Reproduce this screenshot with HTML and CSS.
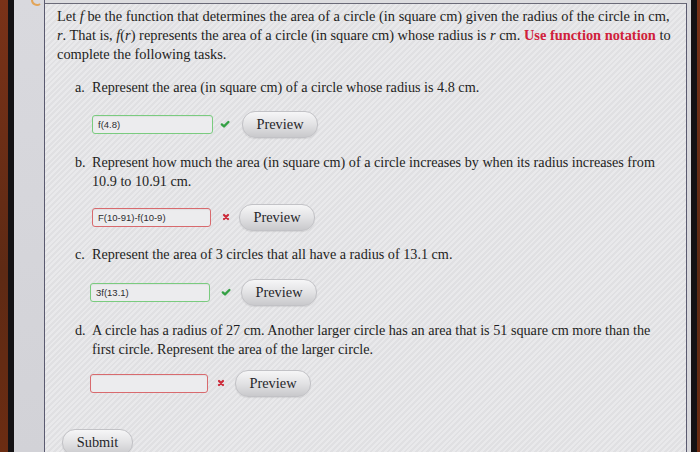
FILE: index.html
```html
<!DOCTYPE html>
<html>
<head>
<meta charset="utf-8">
<link rel="stylesheet" href="styles.css">
</head>
<body>
<div class="screen">
  <div class="edge-brown"></div>
  <div class="edge-black"></div>
  <div class="sidebar"><svg class="logo" width="14" height="7" viewBox="0 0 14 7"><path d="M3 0 A5 5 0 0 0 11 4" fill="none" stroke="#e2a458" stroke-width="2"/></svg></div>
  <div class="main">
    <p class="intro">Let <i>f</i> be the function that determines the area of a circle (in square cm) given the radius of the circle in cm, <i>r</i>. That is, <i>f</i>(<i>r</i>) represents the area of a circle (in square cm) whose radius is <i>r</i> cm. <b class="red">Use function notation</b> to complete the following tasks.</p>

    <div class="item item-a">
      <div class="q"><span class="mark">a.</span><span class="qt">Represent the area (in square cm) of a circle whose radius is 4.8 cm.</span></div>
      <div class="row">
        <div class="inp ok">f(4.8)</div>
        <svg class="ico" width="12" height="10" viewBox="0 0 12 10"><path d="M2.8 5.4 L5 7.4 L9.4 3" fill="none" stroke="#34a044" stroke-width="2.4" stroke-linecap="round" stroke-linejoin="round"/></svg>
        <div class="btn">Preview</div>
      </div>
    </div>

    <div class="item item-b">
      <div class="q"><span class="mark">b.</span><span class="qt">Represent how much the area (in square cm) of a circle increases by when its radius increases from 10.9 to 10.91 cm.</span></div>
      <div class="row">
        <div class="inp bad">F(10-91)-f(10-9)</div>
        <svg class="ico x" width="12" height="10" viewBox="0 0 12 10"><path d="M4 3 L8 7 M8 3 L4 7" fill="none" stroke="#cc2a3a" stroke-width="2.2" stroke-linecap="round"/></svg>
        <div class="btn">Preview</div>
      </div>
    </div>

    <div class="item item-c">
      <div class="q"><span class="mark">c.</span><span class="qt">Represent the area of 3 circles that all have a radius of 13.1 cm.</span></div>
      <div class="row">
        <div class="inp ok">3f(13.1)</div>
        <svg class="ico" width="12" height="10" viewBox="0 0 12 10"><path d="M2.8 5.4 L5 7.4 L9.4 3" fill="none" stroke="#34a044" stroke-width="2.4" stroke-linecap="round" stroke-linejoin="round"/></svg>
        <div class="btn">Preview</div>
      </div>
    </div>

    <div class="item item-d">
      <div class="q"><span class="mark">d.</span><span class="qt">A circle has a radius of 27 cm. Another larger circle has an area that is 51 square cm more than the first circle. Represent the area of the larger circle.</span></div>
      <div class="row">
        <div class="inp bad"></div>
        <svg class="ico x" width="12" height="10" viewBox="0 0 12 10"><path d="M4 3 L8 7 M8 3 L4 7" fill="none" stroke="#cc2a3a" stroke-width="2.2" stroke-linecap="round"/></svg>
        <div class="btn">Preview</div>
      </div>
    </div>

    <div class="submit-row"><div class="btn submit">Submit</div></div>
  </div>
  <div class="edge-light"></div>
  <div class="edge-black"></div>
  <div class="edge-brown r"></div>
</div>
</body>
</html>
```
FILE: styles.css
```css
html, body {
  margin: 0;
  padding: 0;
  width: 700px;
  height: 452px;
  overflow: hidden;
  background: #dcdcdf;
}
.screen {
  display: flex;
  width: 700px;
  height: 452px;
  font-family: "Liberation Serif", "Times New Roman", serif;
  color: #1e1e22;
}
.edge-brown {
  width: 8px;
  flex: none;
  background: linear-gradient(180deg, #7a3218 0%, #5e2a14 60%, #6b2c12 100%);
}
.edge-brown.r { width: 3px; }
.edge-black {
  width: 6px;
  flex: none;
  background: #141214;
}
.sidebar {
  width: 30px;
  flex: none;
  background: linear-gradient(180deg, #d9d9de, #d2d2d7);
  border-right: 1px solid #5a5a70;
  display: flex;
  align-items: flex-start;
  overflow: hidden;
}
.logo {
  display: block;
  margin-left: 15px;
}
.edge-light {
  width: 4px;
  flex: none;
  background: #d8d8dc;
}
.main {
  flex: 1;
  margin-top: 3px;
  border-top: 1px solid #6a6a78;
  border-right: 1px solid #5a5a70;
  background-color: #e4e4e7;
  background-image: repeating-linear-gradient(135deg, rgba(255,255,255,0.18) 0 2px, rgba(0,0,0,0.02) 2px 4px);
  padding: 2.5px 7px 0 12px;
  font-size: 14.2px;
  line-height: 19px;
}
.intro {
  margin: 0;
  font-size: 14.4px;
}
.red {
  color: #d0203a;
}
.q {
  display: flex;
  padding-left: 18px;
}
.mark {
  width: 17px;
  flex: none;
}
.qt {
  flex: 1;
  padding-right: 14px;
}
.item-a { margin-top: 14px; }
.item-b { margin-top: 15px; }
.item-c { margin-top: 14px; }
.item-d { margin-top: 15px; }
.row {
  display: flex;
  align-items: center;
  height: 27px;
  padding-left: 35px;
}
.item-a .row { margin-top: 14px; }
.item-b .row { margin-top: 13px; }
.item-c .row { margin-top: 15px; padding-left: 33px; }
.item-d .row { margin-top: 11px; padding-left: 33px; }
.inp {
  width: 114px;
  height: 17px;
  border: 1.5px solid #7acb7f;
  border-radius: 3px;
  background: #ececee;
  font-family: "Liberation Sans", Arial, sans-serif;
  font-size: 9.5px;
  line-height: 17px;
  padding-left: 5px;
  color: #2c2c30;
  box-shadow: inset 0 1px 1px rgba(0,0,0,0.05);
}
.inp.bad { border-color: #d86a6e; }
.item-b .inp { width: 112px; }
.item-c .inp { width: 113px; }
.item-d .inp { width: 111px; }
.ico {
  display: block;
  flex: none;
  margin-left: 6px;
  margin-right: 11px;
}
.ico.x { margin-left: 9px; margin-right: 7px; }
.item-c .ico { margin-left: 10px; margin-right: 9px; }
.item-d .ico.x { margin-left: 7px; margin-right: 8px; }
.btn {
  width: 74px;
  height: 25px;
  border: 1px solid #c2c2c6;
  border-radius: 13px;
  background: linear-gradient(180deg, #f6f6f7 0%, #e2e2e4 50%, #c9c9cc 100%);
  text-align: center;
  line-height: 24px;
  font-size: 14.4px;
  color: #26262a;
  box-shadow: 0 1px 1px rgba(0,0,0,0.08);
}
.submit-row {
  margin-top: 32px;
  padding-left: 5px;
}
.submit {
  width: 69px;
}
```
